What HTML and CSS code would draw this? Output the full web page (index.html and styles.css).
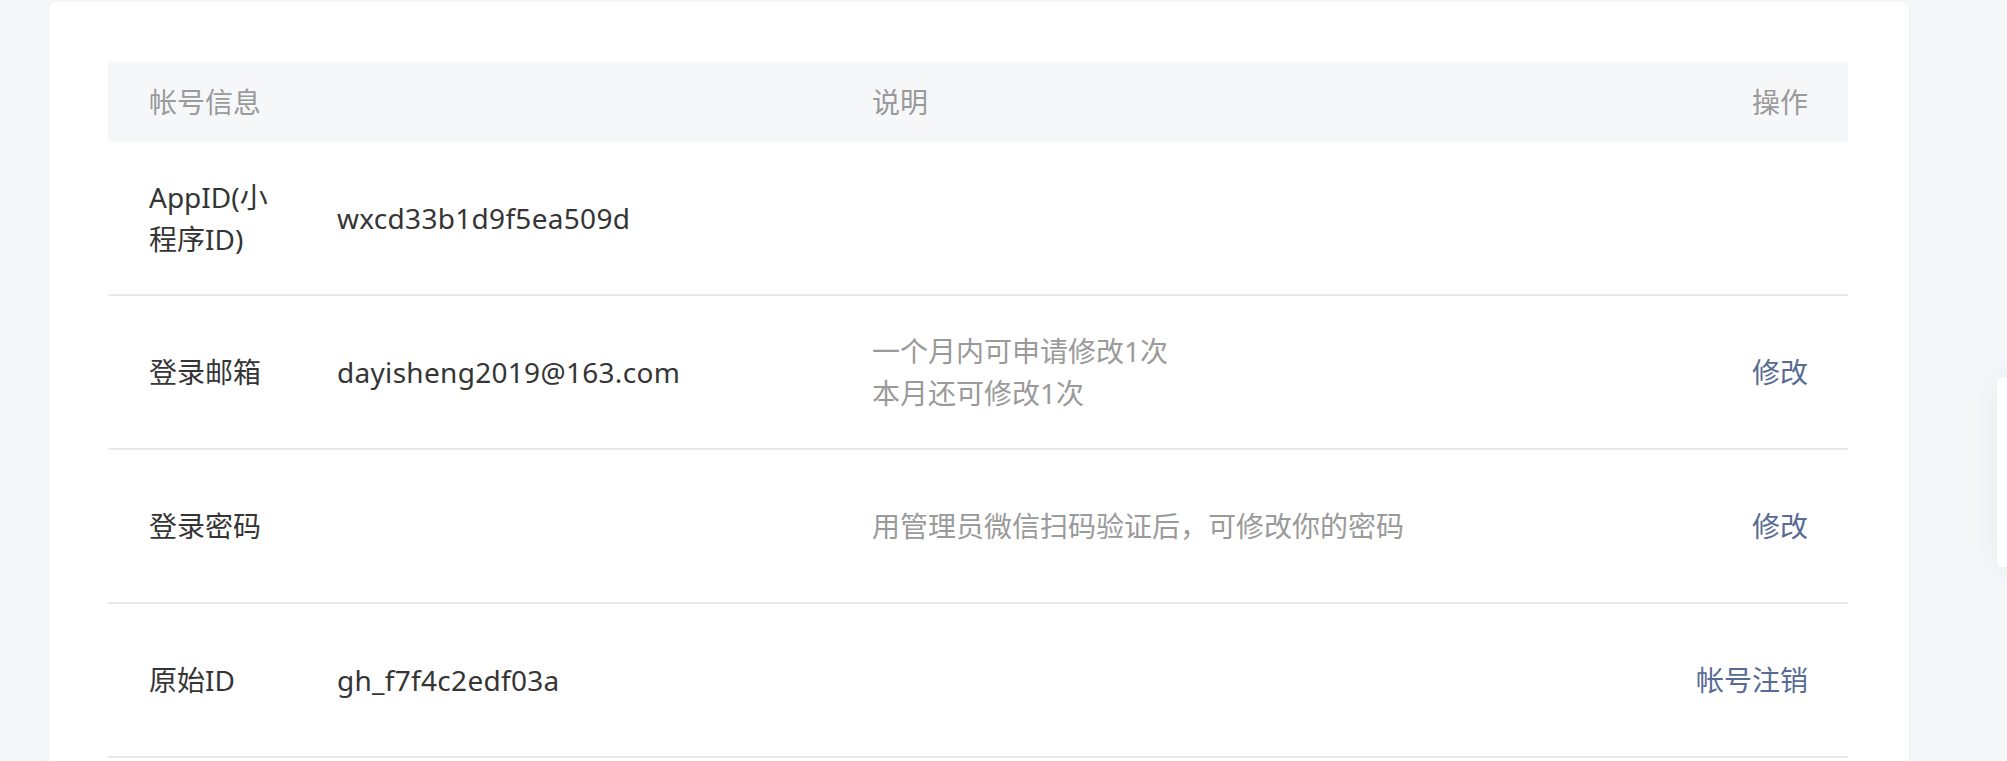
FILE: index.html
```html
<!DOCTYPE html>
<html lang="zh-CN">
<head>
<meta charset="utf-8">
<title>帐号信息</title>
<link rel="stylesheet" href="styles.css">
</head>
<body>
<div class="page">
  <div class="card">
    <div class="table">
      <div class="row head">
        <div class="cell c1">帐号信息</div>
        <div class="cell c2"></div>
        <div class="cell c3">说明</div>
        <div class="cell c4">操作</div>
      </div>
      <div class="row">
        <div class="cell c1 label">AppID(小程序ID)</div>
        <div class="cell c2 value">wxcd33b1d9f5ea509d</div>
        <div class="cell c3 desc"></div>
        <div class="cell c4"></div>
      </div>
      <div class="row">
        <div class="cell c1 label">登录邮箱</div>
        <div class="cell c2 value">dayisheng2019@163.com</div>
        <div class="cell c3 desc">一个月内可申请修改1次<br>本月还可修改1次</div>
        <div class="cell c4"><a class="link" href="#">修改</a></div>
      </div>
      <div class="row">
        <div class="cell c1 label">登录密码</div>
        <div class="cell c2 value"></div>
        <div class="cell c3 desc">用管理员微信扫码验证后，可修改你的密码</div>
        <div class="cell c4"><a class="link" href="#">修改</a></div>
      </div>
      <div class="row">
        <div class="cell c1 label">原始ID</div>
        <div class="cell c2 value">gh_f7f4c2edf03a</div>
        <div class="cell c3 desc"></div>
        <div class="cell c4"><a class="link" href="#">帐号注销</a></div>
      </div>
    </div>
  </div>
  <div class="side-panel"></div>
</div>
</body>
</html>
```
FILE: styles.css
```css
* {
  box-sizing: border-box;
}

html, body {
  margin: 0;
  padding: 0;
  background: #f6f7f9;
  overflow: hidden;
}

body {
  font-family: "Noto Sans", "Noto Sans CJK SC", sans-serif;
  font-size: 28px;
  line-height: 42px;
  color: #353535;
}

.page {
  position: relative;
  padding: 2px 0 0 49px;
  height: 761px;
  overflow: hidden;
}

.card {
  width: 1860px;
  min-height: 800px;
  background: #ffffff;
  border-radius: 6px;
  box-shadow: 0 0 3px rgba(0, 0, 0, 0.06);
  padding: 60px 61px 60px 59px;
}

.table {
  display: flex;
  flex-direction: column;
}

.row {
  display: grid;
  grid-template-columns: 188px 535px 1fr auto;
  align-items: center;
  height: 154px;
  border-bottom: 2px solid #e9e9ec;
}

.row.head {
  height: 80px;
  background: #f6f7f9;
  border-bottom: none;
  color: #9a9a9a;
}

.cell {
  padding-left: 41px;
}

.c1 {
  padding-right: 17px;
}

.value {
  letter-spacing: 0.3px;
}

.c4 {
  padding-right: 40px;
  text-align: right;
}

.desc {
  color: #9a9a9a;
}

.link {
  color: #576b95;
  text-decoration: none;
}

.side-panel {
  position: absolute;
  left: 1997px;
  top: 378px;
  width: 40px;
  height: 189px;
  background: #ffffff;
  border-radius: 5px;
  box-shadow: 0 0 30px rgba(40, 60, 110, 0.08);
}
```
